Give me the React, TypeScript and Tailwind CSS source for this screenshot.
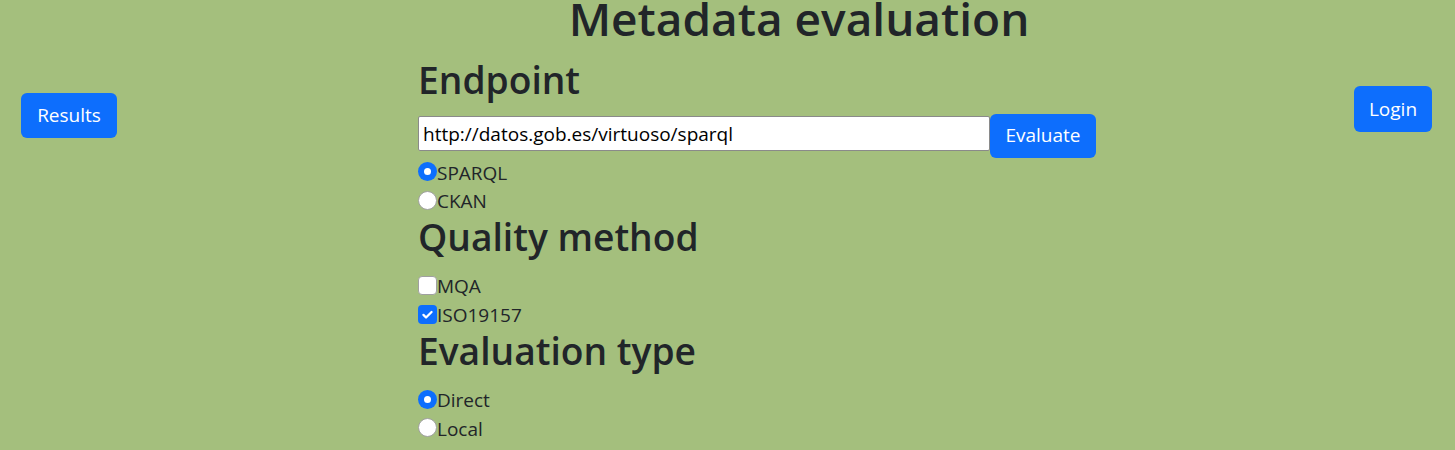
import React from "react";

const font = { fontFamily: '"Open Sans", "Noto Sans", sans-serif' };

function Radio({ checked, label }: { checked?: boolean; label: string }) {
  return (
    <div className="flex h-[28.8px] items-start">
      <span
        className={
          checked
            ? "mt-[4.8px] flex h-[19px] w-[19px] shrink-0 items-center justify-center rounded-full bg-[#0d6efd]"
            : "mt-[4.8px] h-[19px] w-[19px] shrink-0 rounded-full border border-[#a0a0a0] bg-white"
        }
      >
        {checked && <span className="h-[7px] w-[7px] rounded-full bg-white" />}
      </span>
      <span className="pt-[1px] text-[19px] leading-[28px] text-[#212529]">{label}</span>
    </div>
  );
}

function Check({ checked, label }: { checked?: boolean; label: string }) {
  return (
    <div className="flex h-[28.8px] items-start">
      <span
        className={
          checked
            ? "mt-[4.8px] flex h-[19px] w-[19px] shrink-0 items-center justify-center rounded-[4px] bg-[#0d6efd]"
            : "mt-[4.8px] h-[19px] w-[19px] shrink-0 rounded-[4px] border border-[#a0a0a0] bg-white"
        }
      >
        {checked && (
          <svg width="13" height="13" viewBox="0 0 16 16" fill="none">
            <path d="M3 8.5l3.2 3.2L13 5" stroke="white" strokeWidth="2.8" strokeLinecap="round" strokeLinejoin="round" />
          </svg>
        )}
      </span>
      <span className="pt-[1px] text-[19px] leading-[28px] text-[#212529]">{label}</span>
    </div>
  );
}

function Heading({ children }: { children: React.ReactNode }) {
  return (
    <h2 className="mb-[12px] whitespace-nowrap text-[37.2px] font-semibold leading-[44px] text-[#212529]">
      {children}
    </h2>
  );
}

export default function App() {
  return (
    <div className="flex min-h-[450px] w-full items-start bg-[#a4bf7d]" style={font}>
      <div className="w-[418px] shrink-0 pl-[21px] pt-[93px]">
        <button className="h-[45px] w-[96px] rounded-[6px] bg-[#0d6efd] text-[19px] text-white">Results</button>
      </div>
      <div className="w-[762px] shrink-0">
        <h1 className="mb-[20.6px] whitespace-nowrap text-center text-[46px] font-semibold leading-[37px] text-[#212529]">
          Metadata evaluation
        </h1>
        <Heading>Endpoint</Heading>
        <div className="flex h-[44px] items-start">
          <input
            readOnly
            value="http://datos.gob.es/virtuoso/sparql"
            className="mt-[2.5px] h-[35px] w-[572px] rounded-[2px] border border-[#8a8a8a] bg-white px-[4px] text-[19px] text-black outline-none"
            style={font}
          />
          <button className="h-[44px] w-[106px] rounded-[6px] bg-[#0d6efd] text-[19px] text-white">Evaluate</button>
        </div>
        <Radio checked label="SPARQL" />
        <Radio label="CKAN" />
        <Heading>Quality method</Heading>
        <Check label="MQA" />
        <Check checked label="ISO19157" />
        <Heading>Evaluation type</Heading>
        <Radio checked label="Direct" />
        <Radio label="Local" />
      </div>
      <div className="flex flex-1 justify-end pr-[23px] pt-[86px]">
        <button className="h-[46px] w-[78px] rounded-[6px] bg-[#0d6efd] text-[19px] text-white">Login</button>
      </div>
    </div>
  );
}
